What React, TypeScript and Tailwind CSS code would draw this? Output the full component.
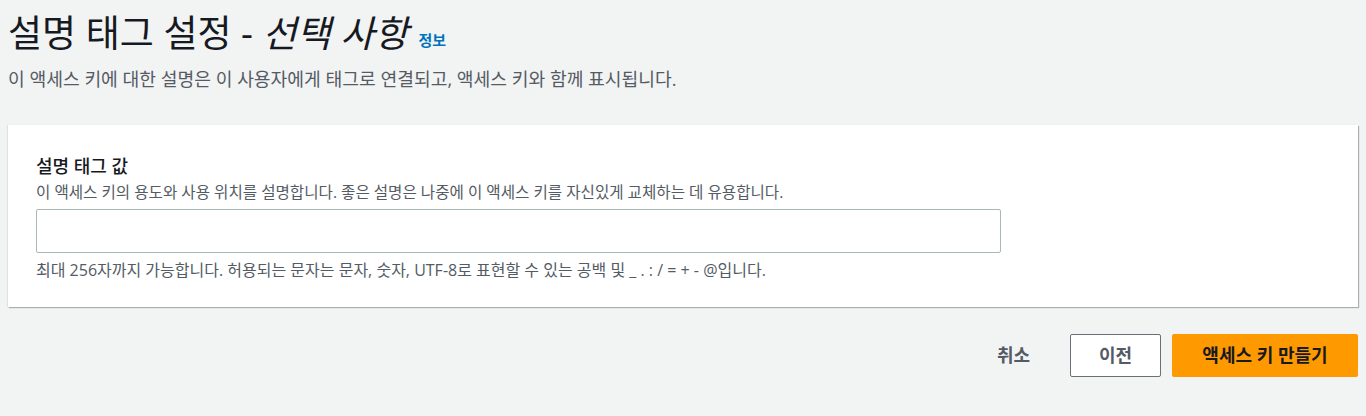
export default function App() {
    return (
        <div
            className="min-h-[416px] w-full bg-[#f2f3f3] text-[#16191f]"
            style={{ fontFamily: '"Open Sans", "Noto Sans CJK KR", sans-serif' }}
        >
            <div className="px-2 pt-[9px]">
                {/* Header */}
                <div className="flex items-end gap-[10px]">
                    <h1 className="text-[37px] leading-[48px] font-normal">
                        설명 태그 설정 - <i>선택 사항</i>
                    </h1>
                    <a className="mb-[7px] text-[15px] leading-[20px] font-bold text-[#0073bb]">정보</a>
                </div>
                <p className="mt-[9px] text-[18.2px] leading-[26px] text-[#545b64]">
                    이 액세스 키에 대한 설명은 이 사용자에게 태그로 연결되고, 액세스 키와 함께 표시됩니다.
                </p>

                {/* Panel */}
                <div className="mt-[33px] bg-white px-[28px] pt-[28px] pb-[26px] shadow-[1px_1px_1px_0_rgba(0,28,36,0.3),-1px_0_1px_0_rgba(0,28,36,0.08)]">
                    <label className="block text-[18px] leading-[26px] font-medium">설명 태그 값</label>
                    <p className="mt-[2px] text-[15.6px] leading-[22px] text-[#545b64]">
                        이 액세스 키의 용도와 사용 위치를 설명합니다. 좋은 설명은 나중에 이 액세스 키를 자신있게 교체하는 데 유용합니다.
                    </p>
                    <input
                        type="text"
                        className="mt-[6px] block h-[44px] w-[965px] rounded-[2px] border border-[#aab7b8] bg-white px-3 outline-none"
                    />
                    <p className="mt-[6px] text-[16px] leading-[22px] text-[#545b64]">
                        최대 256자까지 가능합니다. 허용되는 문자는 문자, 숫자, UTF-8로 표현할 수 있는 공백 및 _ . : / = + - @입니다.
                    </p>
                </div>

                {/* Actions */}
                <div className="mt-[27px] flex items-center justify-end">
                    <button className="mr-[40px] text-[18px] font-bold text-[#545b64]">취소</button>
                    <button className="mr-[11px] h-[43px] w-[91px] rounded-[2px] border border-[#687078] bg-white text-[18px] font-bold text-[#545b64]">
                        이전
                    </button>
                    <button className="h-[43px] w-[186px] rounded-[2px] bg-[#ff9900] text-[18px] font-bold text-[#16191f]">
                        액세스 키 만들기
                    </button>
                </div>
            </div>
        </div>
    );
}
